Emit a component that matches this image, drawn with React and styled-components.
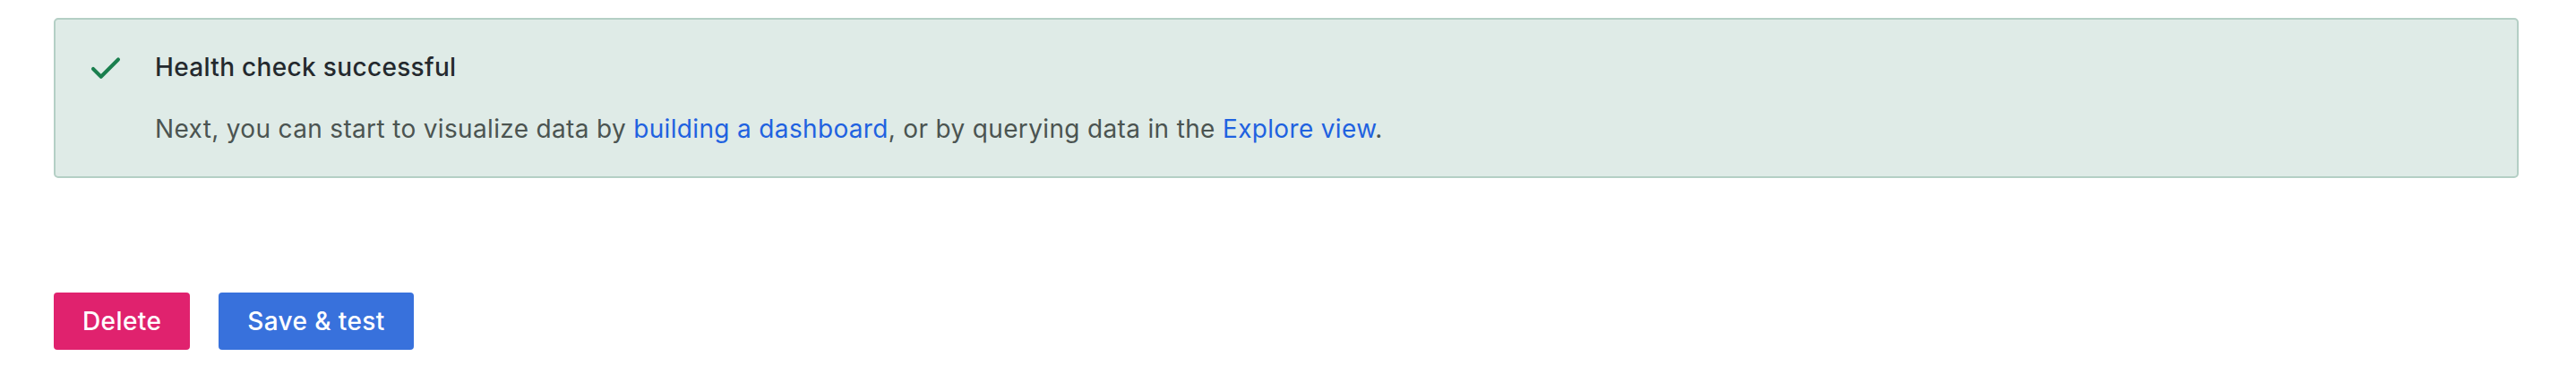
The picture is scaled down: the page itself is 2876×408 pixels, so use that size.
import React from "react";
import styled, { createGlobalStyle } from "styled-components";

const Global = createGlobalStyle`
  html, body { margin: 0; padding: 0; background: #ffffff; }
  body { font-family: Inter, "Noto Sans", sans-serif; -webkit-font-smoothing: antialiased; }
`;

const Page = styled.div`
  padding: 20px 64px 0 60px;
  display: flex;
  flex-direction: column;
`;

const Alert = styled.div`
  display: flex;
  align-items: flex-start;
  gap: 34px;
  background: #dfebe7;
  border: 2px solid #b4cfc5;
  border-radius: 5px;
  padding: 35px 35px 35px 35px;
`;

const IconBox = styled.div`
  width: 42px;
  height: 42px;
  flex: none;
  color: #1a7f4e;
  margin-top: -1px;
`;

const Content = styled.div`
  display: flex;
  flex-direction: column;
  gap: 33px;
`;

const Title = styled.div`
  font-size: 28px;
  line-height: 36px;
  font-weight: 500;
  letter-spacing: 0.33px;
  color: #24292e;
`;

const Body = styled.div`
  font-size: 28px;
  line-height: 36px;
  font-weight: 400;
  letter-spacing: 0.34px;
  color: #4b5451;
`;

const Link = styled.a`
  color: #1f62e0;
  text-decoration: none;
`;

const Actions = styled.div`
  display: flex;
  gap: 32px;
  margin-top: 128px;
`;

const Button = styled.button`
  height: 64px;
  padding: 0 32px;
  border: none;
  border-radius: 4px;
  font-family: Inter, "Noto Sans", sans-serif;
  font-size: 28px;
  font-weight: 500;
  letter-spacing: 0.4px;
  color: #ffffff;
  background: ${(p) => (p.$variant === "destructive" ? "#e0226e" : "#3871dc")};
  cursor: pointer;
`;

export default function App() {
  return (
    <>
      <Global />
      <Page>
        <Alert>
          <IconBox>
            <svg width="42" height="42" viewBox="0 0 24 24" fill="none" stroke="currentColor" strokeWidth="2.3" strokeLinecap="round" strokeLinejoin="round">
              <path d="M20 6 9 17l-5-5" />
            </svg>
          </IconBox>
          <Content>
            <Title>Health check successful</Title>
            <Body>
              Next, you can start to visualize data by <Link href="#">building a dashboard</Link>, or by querying data in the <Link href="#">Explore view</Link>.
            </Body>
          </Content>
        </Alert>
        <Actions>
          <Button $variant="destructive">Delete</Button>
          <Button $variant="primary">Save &amp; test</Button>
        </Actions>
      </Page>
    </>
  );
}
